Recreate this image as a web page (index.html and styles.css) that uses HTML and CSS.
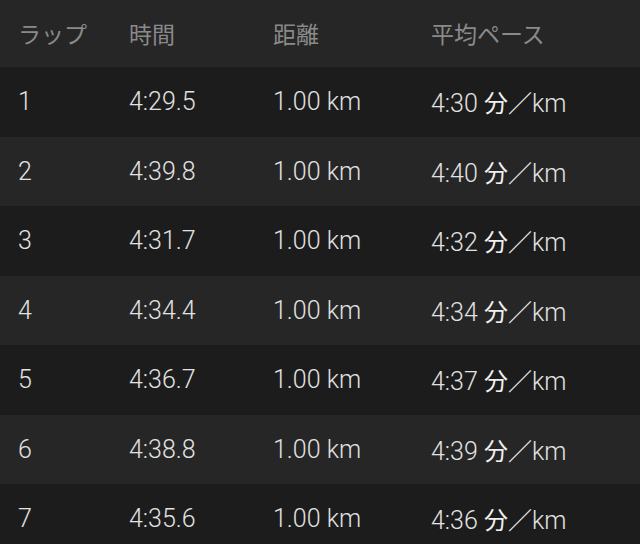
FILE: index.html
```html
<!DOCTYPE html>
<html lang="ja">
<head>
<meta charset="utf-8">
<link rel="stylesheet" href="styles.css">
</head>
<body>
<div class="table">
  <div class="row head">
    <div class="c c1">ラップ</div><div class="c c2">時間</div><div class="c c3">距離</div><div class="c c4">平均ペース</div>
  </div>
  <div class="row odd"><div class="c c1">1</div><div class="c c2">4:29.5</div><div class="c c3">1.00 km</div><div class="c c4">4:30 <span class="u">分／</span>km</div></div>
  <div class="row even"><div class="c c1">2</div><div class="c c2">4:39.8</div><div class="c c3">1.00 km</div><div class="c c4">4:40 <span class="u">分／</span>km</div></div>
  <div class="row odd"><div class="c c1">3</div><div class="c c2">4:31.7</div><div class="c c3">1.00 km</div><div class="c c4">4:32 <span class="u">分／</span>km</div></div>
  <div class="row even"><div class="c c1">4</div><div class="c c2">4:34.4</div><div class="c c3">1.00 km</div><div class="c c4">4:34 <span class="u">分／</span>km</div></div>
  <div class="row odd"><div class="c c1">5</div><div class="c c2">4:36.7</div><div class="c c3">1.00 km</div><div class="c c4">4:37 <span class="u">分／</span>km</div></div>
  <div class="row even"><div class="c c1">6</div><div class="c c2">4:38.8</div><div class="c c3">1.00 km</div><div class="c c4">4:39 <span class="u">分／</span>km</div></div>
  <div class="row odd"><div class="c c1">7</div><div class="c c2">4:35.6</div><div class="c c3">1.00 km</div><div class="c c4">4:36 <span class="u">分／</span>km</div></div>
</div>
</body>
</html>
```
FILE: styles.css
```css
html, body {
  margin: 0;
  padding: 0;
  background: #1c1c1c;
}
body {
  width: 640px;
  height: 544px;
  overflow: hidden;
  font-family: Roboto, "Noto Sans CJK JP", sans-serif;
  font-weight: 300;
  font-size: 25px;
  color: #e2e2e2;
}
.table {
  display: flex;
  flex-direction: column;
}
.row {
  display: grid;
  grid-template-columns: 111px 144px 158px 1fr;
  align-items: center;
  padding-left: 18px;
  height: 69.5px;
}
.row.head {
  height: 67px;
  background: #262626;
  color: #8a8a8a;
  font-family: "Noto Sans CJK JP", sans-serif;
  font-weight: 400;
  font-size: 23px;
  padding-bottom: 2px;
  box-sizing: border-box;
}
.row.odd { background: #1c1c1c; }
.row.even { background: #262626; }
.c { white-space: nowrap; }
.u {
  font-family: "Noto Sans CJK JP", sans-serif;
  font-weight: 400;
  color: #f0f0f0;
  font-size: 24px;
}
```
